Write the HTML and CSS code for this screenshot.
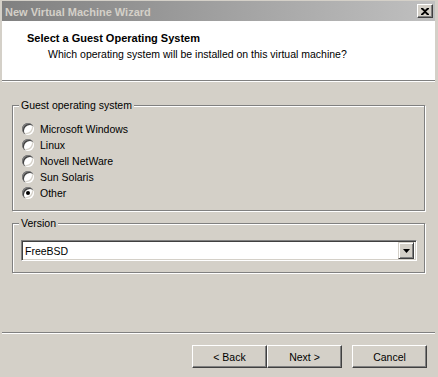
FILE: index.html
```html
<!DOCTYPE html>
<html>
<head>
<meta charset="utf-8">
<link rel="stylesheet" href="styles.css">
</head>
<body>
<div class="window">
  <div class="titlebar">
    <span class="title">New Virtual Machine Wizard</span>
    <span class="close">
      <svg width="8" height="7" viewBox="0 0 8 7"><path d="M0 0h2l2 2 2-2h2v1L5 3.5 8 6v1H6L4 5 2 7H0V6l3-2.5L0 1z" fill="#000"/></svg>
    </span>
  </div>
  <div class="header">
    <div class="h-title">Select a Guest Operating System</div>
    <div class="h-sub">Which operating system will be installed on this virtual machine?</div>
  </div>
  <div class="body">
    <div class="group group-os">
      <span class="legend">Guest operating system</span>
      <div class="radios">
        <div class="radio-row"><span class="radio"></span><span>Microsoft Windows</span></div>
        <div class="radio-row"><span class="radio"></span><span>Linux</span></div>
        <div class="radio-row"><span class="radio"></span><span>Novell NetWare</span></div>
        <div class="radio-row"><span class="radio"></span><span>Sun Solaris</span></div>
        <div class="radio-row"><span class="radio checked"></span><span>Other</span></div>
      </div>
    </div>
    <div class="group group-ver">
      <span class="legend">Version</span>
      <div class="combo">
        <span class="combo-text">FreeBSD</span>
        <span class="combo-btn"><svg width="7" height="4" viewBox="0 0 7 4"><path d="M0 0h7L3.5 4z" fill="#000"/></svg></span>
      </div>
    </div>
  </div>
  <div class="footer">
    <div class="btn-pair">
      <button class="btn">&lt; Back</button>
      <button class="btn">Next &gt;</button>
    </div>
    <button class="btn">Cancel</button>
  </div>
</div>
</body>
</html>
```
FILE: styles.css
```css
html, body {
  margin: 0;
  padding: 0;
  background: #d4d0c8;
}
.window {
  width: 438px;
  height: 377px;
  box-sizing: border-box;
  padding: 1px 3px 0 2px;
  display: flex;
  flex-direction: column;
  background: #d4d0c8;
  font-family: "Liberation Sans", Arial, sans-serif;
  font-size: 10.5px;
  color: #000;
}
.titlebar {
  height: 20px;
  flex: none;
  background: linear-gradient(to right, #808080, #c0c0c0);
  display: flex;
  align-items: center;
  justify-content: space-between;
  padding: 0 2px 0 3px;
}
.title {
  color: #d4d0c8;
  font-weight: bold;
  font-size: 11px;
  margin-top: 1px;
}
.close {
  width: 14px;
  height: 12px;
  background: #d4d0c8;
  border: 1px solid;
  border-color: #fff #404040 #404040 #fff;
  box-shadow: inset -1px -1px #808080;
  display: flex;
  align-items: center;
  justify-content: center;
}
.header {
  flex: none;
  background: #fff;
  border-bottom: 1px solid #808080;
  box-shadow: 0 1px #fff;
  margin-bottom: 1px;
  padding: 10px 0 0 25px;
  box-sizing: border-box;
  height: 60px;
}
.h-title {
  font-weight: bold;
  font-size: 11px;
  line-height: 14px;
}
.h-sub {
  padding-left: 21px;
  margin-top: 2px;
  line-height: 14px;
}
.body {
  flex: 1;
  padding: 23px 10px 0 10px;
  border-bottom: 1px solid #808080;
  box-shadow: 0 1px #fff;
}
.group {
  position: relative;
  border: 1px solid #808080;
  box-shadow: inset 1px 1px #fff, 1px 1px #fff;
}
.legend {
  position: absolute;
  left: 6px;
  top: -8px;
  padding: 0 2px;
  background: #d4d0c8;
  line-height: 14px;
}
.group-os {
  height: 104px;
}
.radios {
  padding: 15px 0 0 9px;
  display: flex;
  flex-direction: column;
}
.radio-row {
  height: 16px;
  display: flex;
  align-items: center;
  gap: 6px;
}
.radio {
  width: 12px;
  height: 12px;
  border-radius: 50%;
  background: #fff;
  box-shadow: inset 1px 1px #808080, inset 2px 2px #404040, inset -1px -1px #fff, inset -2px -2px #d4d0c8;
  position: relative;
}
.radio.checked::after {
  content: "";
  position: absolute;
  left: 4px;
  top: 4px;
  width: 4px;
  height: 4px;
  border-radius: 50%;
  background: #000;
}
.group-ver {
  margin-top: 12px;
  height: 50px;
  padding: 16px 7px 0 8px;
  box-sizing: border-box;
}
.combo {
  height: 21px;
  box-sizing: border-box;
  background: #fff;
  border: 1px solid;
  border-color: #808080 #fff #fff #808080;
  box-shadow: inset 1px 1px #404040, inset -1px -1px #d4d0c8;
  display: flex;
  align-items: center;
  justify-content: space-between;
  padding: 2px 2px 2px 3px;
}
.combo-text {
  line-height: 14px;
}
.combo-btn {
  width: 16px;
  height: 17px;
  box-sizing: border-box;
  background: #d4d0c8;
  border: 1px solid;
  border-color: #d4d0c8 #404040 #404040 #d4d0c8;
  box-shadow: inset 1px 1px #fff, inset -1px -1px #808080;
  display: flex;
  align-items: center;
  justify-content: center;
}
.footer {
  flex: none;
  height: 44px;
  box-sizing: border-box;
  padding: 12px 8px 0 0;
  display: flex;
  justify-content: flex-end;
  align-items: flex-start;
  gap: 10px;
}
.btn-pair {
  display: flex;
}
.btn {
  width: 75px;
  height: 23px;
  margin: 0;
  padding: 0;
  background: #d4d0c8;
  border: 1px solid;
  border-color: #fff #404040 #404040 #fff;
  box-shadow: inset -1px -1px #808080;
  font-family: "Liberation Sans", Arial, sans-serif;
  font-size: 10.5px;
  color: #000;
}
```
